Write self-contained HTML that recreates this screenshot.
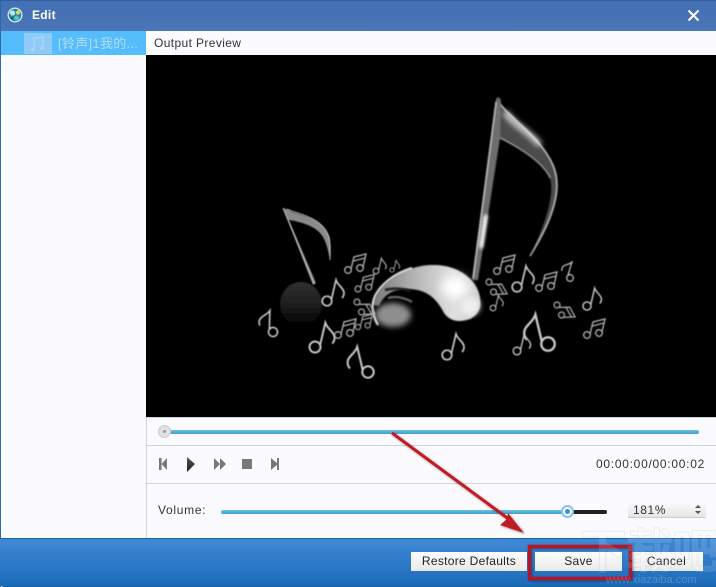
<!DOCTYPE html>
<html><head><meta charset="utf-8">
<style>
html,body{margin:0;padding:0;background:#fff}
#w{position:relative;width:716px;height:587px;overflow:hidden;background:#fbfaff;font-family:"Liberation Sans","Noto Sans CJK SC",sans-serif;font-size:12px;color:#333;letter-spacing:.3px}
#w div{position:absolute;box-sizing:border-box}
.btn{top:552px;height:19px;background:linear-gradient(#fdfdfd,#e9e9e9);color:#222;text-align:center;line-height:19px;font-size:12px}
</style></head><body>
<div id="w">
<div style="left:0;top:0;width:716px;height:31px;background:linear-gradient(#4370b2,#4a75b8);border-top:1px solid #2f5f9e"></div>
<div style="left:0;top:0;width:1px;height:587px;background:#2a6aa5"></div>
<svg style="position:absolute;left:7px;top:7px" width="16" height="16" viewBox="0 0 16 16"><circle cx="8" cy="8" r="7.5" fill="#d8f0ec"/><circle cx="8" cy="8" r="6.2" fill="#1f8a9c"/><circle cx="5.5" cy="6" r="2.600" fill="#bfe6e0"/><circle cx="11" cy="5.500" r="2.200" fill="#d9d46a"/><circle cx="9.500" cy="11" r="2.400" fill="#56c0d8"/><circle cx="5" cy="11" r="1.400" fill="#2a5f80"/></svg>
<div style="left:32px;top:8px;color:#fff;font-weight:bold;font-size:12px;line-height:15px">Edit</div>
<svg style="position:absolute;left:687px;top:9px" width="13" height="13" viewBox="0 0 13 13"><path d="M1.500 1.500L11.500 11.500M11.500 1.500L1.500 11.500" stroke="#fff" stroke-width="2"/></svg>

<div style="left:1px;top:31px;width:145px;height:24px;background:#55bdfb"></div>
<div style="left:24px;top:33px;width:28px;height:21px;background:#8fcbf6"></div>
<svg style="position:absolute;left:24px;top:33px" width="28" height="21" viewBox="0 0 28 21"><path d="M10 16V5.500L19 4V14.500" fill="none" stroke="#a9d6f5" stroke-width="1.500"/><ellipse cx="8.500" cy="16.500" rx="2.300" ry="1.800" fill="#a9d6f5"/><ellipse cx="17.500" cy="15" rx="2.300" ry="1.800" fill="#a9d6f5"/></svg>
<div style="left:58px;top:36px;color:#b3dcf8;font-size:13px;line-height:15px;white-space:nowrap">[铃声]1我的...</div>
<div style="left:154px;top:36px;color:#333;font-size:12px;line-height:15px;letter-spacing:.38px">Output Preview</div>

<div style="left:146px;top:55px;width:570px;height:362px;background:#000"></div>
<svg style="position:absolute;left:146px;top:55px" width="570" height="362" viewBox="146 55 570 362">
<defs>
<filter id="b0" filterUnits="userSpaceOnUse" x="146" y="55" width="570" height="362"><feGaussianBlur stdDeviation="0.450"/></filter>
<filter id="b1" filterUnits="userSpaceOnUse" x="146" y="55" width="570" height="362"><feGaussianBlur stdDeviation="0.800"/></filter>
<filter id="b15" filterUnits="userSpaceOnUse" x="146" y="55" width="570" height="362"><feGaussianBlur stdDeviation="1.500"/></filter>
<filter id="b2" filterUnits="userSpaceOnUse" x="146" y="55" width="570" height="362"><feGaussianBlur stdDeviation="3"/></filter>
<filter id="b3" filterUnits="userSpaceOnUse" x="146" y="55" width="570" height="362"><feGaussianBlur stdDeviation="5"/></filter>
<linearGradient id="dk" x1="0" y1="0" x2="0" y2="1"><stop offset="0" stop-color="#303030"/><stop offset="0.500" stop-color="#1e1e1e"/><stop offset="1" stop-color="#000"/></linearGradient>
<linearGradient id="cr" x1="0" y1="0" x2="1" y2="0"><stop offset="0" stop-color="#777"/><stop offset="0.450" stop-color="#bdbdbd"/><stop offset="0.750" stop-color="#e0e0e0"/><stop offset="1" stop-color="#cfcfcf"/></linearGradient>
<g id="n" fill="none" stroke="#c6c6c6" stroke-width="1.700"><circle cx="0" cy="0" r="4.800"/><path d="M4.500-2L9-21C11-15 17-13 17-8C17-6 16-4 15-3" /></g>
<g id="d" fill="none" stroke="#a8a8a8" stroke-width="1.400"><circle cx="0" cy="0" r="3.300"/><circle cx="12" cy="-2" r="3.300"/><path d="M3-1L6-13L18-16L15-3M5.500-9L17-12"/></g>
</defs>
<g filter="url(#b1)">
<path d="M498 100C505 115 540 135 553 165C562 185 556 215 530 256C545 225 555 195 550 178C543 162 518 147 500 138Z" fill="#4c4c4c"/>
<path d="M498 100C505 115 540 135 553 165C562 185 556 215 530 256" fill="none" stroke="#cfcfcf" stroke-width="1.300"/>
<path d="M500 138C518 147 543 162 550 178" fill="none" stroke="#b0b0b0" stroke-width="1"/>
<path d="M496 99C498 96 501 97 501 103L500 138L478 280L472 280Z" fill="#6e6e6e"/>
<path d="M496 102L473 278" stroke="#d8d8d8" stroke-width="1.200"/>
</g>
<path d="M486 215L481 248" stroke="#fff" stroke-width="4" filter="url(#b15)"/>
<path d="M505 112C515 126 530 132 540 145" stroke="#eee" stroke-width="5" fill="none" filter="url(#b2)"/>
<g filter="url(#b0)">
<path d="M283 208L286 209C296 216 322 216 329 237C331 245 330 254 330 260C328 250 326 238 318 231C310 224 296 221 289 220L316 283L313 285Z" fill="#8a8a8a"/>
<path d="M283 208L314 284M287 209C296 214 322 216 329 237C331 245 330 254 330 260" fill="none" stroke="#c8c8c8" stroke-width=".9"/>
</g>
<ellipse cx="301" cy="304" rx="21" ry="22" fill="url(#dk)" filter="url(#b1)"/>
<!-- big note head -->
<ellipse cx="393" cy="315" rx="18" ry="12" fill="#8e8e8e" filter="url(#b2)"/>
<path d="M373 305C376 285 405 265 432 265C458 264 478 280 480 298C482 310 476 316 470 319C458 323 450 321 444 313C436 297 425 289 408 289C395 288 384 294 379 306Z" fill="url(#cr)" filter="url(#b1)"/>
<ellipse cx="455" cy="287" rx="14" ry="11" fill="#fff" filter="url(#b3)"/>
<ellipse cx="470" cy="306" rx="10" ry="9" fill="#eee" filter="url(#b2)"/>
<path d="M388 298C394 296 404 297 412 302" fill="none" stroke="#777" stroke-width="2" filter="url(#b1)"/>
<path d="M385 290C392 288 402 288 410 291" fill="none" stroke="#1a1a1a" stroke-width="2.500" filter="url(#b1)"/>
<path d="M378 325C372 315 371 305 375 296C381 284 395 273 412 268" fill="none" stroke="#f0f0f0" stroke-width="2" filter="url(#b1)"/>
<g filter="url(#b0)">
<use href="#n" transform="translate(273 332) rotate(-165) scale(.95 -.95)"/>
<use href="#n" transform="translate(315 347) scale(1.150)"/>
<use href="#n" transform="translate(327 301) scale(1)"/>
<use href="#n" transform="translate(368 372) scale(-1.200 1.200)"/>
<use href="#n" transform="translate(447 355) scale(1)"/>
<use href="#n" transform="translate(517 287) scale(1)"/>
<use href="#n" transform="translate(570 278) rotate(-150) scale(.7 -.7)"/>
<use href="#n" transform="translate(587 306) scale(.85)"/>
<use href="#n" transform="translate(548 344) scale(-1.400 1.400)"/>
<use href="#n" transform="translate(517 351) scale(.8)"/>
<use href="#n" transform="translate(493 308) scale(.6)"/>
<use href="#n" transform="translate(376 271) scale(.6)"/>
<use href="#n" transform="translate(392 270) scale(.45)"/>
<use href="#d" transform="translate(348 270)"/>
<use href="#d" transform="translate(358 289) scale(.9)"/>
<use href="#d" transform="translate(338 335)"/>
<use href="#d" transform="translate(358 327) scale(.8)"/>
<use href="#d" transform="translate(357 302) rotate(75) scale(.9)"/>
<use href="#d" transform="translate(497 271)"/>
<use href="#d" transform="translate(489 282) rotate(75) scale(.9)"/>
<use href="#d" transform="translate(539 288)"/>
<use href="#d" transform="translate(557 305) rotate(75) scale(.9)"/>
<use href="#d" transform="translate(587 335)"/>
</g>
</svg>

<div style="left:146px;top:417px;width:570px;height:1px;background:#c8d4de"></div>
<div style="left:146px;top:445px;width:570px;height:1px;background:#c9d6e2"></div>
<div style="left:146px;top:483px;width:570px;height:1px;background:#c9d6e2"></div>
<div style="left:146px;top:417px;width:1px;height:121px;background:#c9d6e2"></div>
<div style="left:164px;top:430px;width:535px;height:4px;background:linear-gradient(#6fc0e4,#3f9fd0);border-radius:2px"></div>
<div style="left:158px;top:425px;width:13px;height:13px;border-radius:50%;background:#e2e2e2;border:1px solid #ccc"></div>
<div style="left:163px;top:430px;width:3px;height:3px;border-radius:50%;background:#999"></div>

<svg style="position:absolute;left:155px;top:455px" width="130" height="18" viewBox="0 0 130 18"><defs><linearGradient id="pl" x1="0" y1="0" x2="0" y2="1"><stop offset="0" stop-color="#55555c"/><stop offset="1" stop-color="#1d1d24"/></linearGradient></defs><g fill="#77777c"><rect x="4" y="3" width="2.500" height="12"/><path d="M12 3V15L6.500 9Z"/><path d="M59 3L65 9L59 15ZM65 3L71 9L65 15Z"/><rect x="87" y="4" width="10" height="10"/><path d="M116 3L123 9L116 15Z"/><rect x="122" y="3" width="2" height="12"/></g><path d="M32 2L40 9L32 17Z" fill="url(#pl)"/></svg>
<div style="left:596px;top:457px;font-size:12px;color:#333;line-height:15px;letter-spacing:.72px;white-space:nowrap">00:00:00/00:00:02</div>

<div style="left:158px;top:503px;font-size:12px;color:#333;line-height:15px;letter-spacing:.7px">Volume:</div>
<div style="left:221px;top:510px;width:347px;height:4px;background:linear-gradient(#6fc0e4,#3f9fd0);border-radius:2px"></div>
<div style="left:567px;top:510px;width:40px;height:4px;background:#222;border-radius:2px"></div>
<div style="left:561px;top:505px;width:13px;height:13px;border-radius:50%;background:#fff;border:2px solid #7fc6ee"></div>
<div style="left:565px;top:509px;width:5px;height:5px;border-radius:50%;background:#3c8ecc"></div>
<div style="left:628px;top:503px;width:78px;height:15px;background:linear-gradient(#fafafa,#e6e6e6);border-bottom:1px solid #ccc;font-size:12px;line-height:15px;padding-left:5px;color:#333;letter-spacing:.6px">181%</div>
<svg style="position:absolute;left:694px;top:504px" width="8" height="11" viewBox="0 0 8 11"><path d="M1 4L4 1L7 4ZM1 7L4 10L7 7Z" fill="#555"/></svg>

<div style="left:0;top:538px;width:716px;height:49px;background:linear-gradient(#4089d6,#1b6bb9);border-top:1px solid #1c5f9f;border-bottom:1px solid #17609f;border-bottom-left-radius:4px"></div>

<div class="btn" style="left:411px;width:116px">Restore Defaults</div>
<div class="btn" style="left:535px;width:87px">Save</div>
<div class="btn" style="left:630px;width:73px">Cancel</div>

<svg style="position:absolute;left:0;top:0" width="716" height="587" viewBox="0 0 716 587">
<defs><filter id="sh" x="-10%" y="-10%" width="120%" height="120%"><feDropShadow dx="1" dy="1" stdDeviation="1.200" flood-color="#000" flood-opacity=".4"/></filter></defs>
<g filter="url(#sh)">
<rect x="529.500" y="546.500" width="101" height="32" fill="none" stroke="#b3192a" stroke-width="3.500"/>
<path d="M392 433L510 520" stroke="#c01a22" stroke-width="3" fill="none"/>
<path d="M524 533L500 525L507 519L508 513Z" fill="#c01a22"/>
</g>
</svg>
<div style="left:580px;top:526px;font-size:47px;line-height:52px;letter-spacing:-1px;color:rgba(255,255,255,.12);-webkit-text-stroke:1px rgba(150,170,190,.18);font-weight:bold;white-space:nowrap">下载吧</div>
<div style="left:606px;top:574px;font-size:11px;line-height:12px;color:rgba(255,255,255,.22);white-space:nowrap;letter-spacing:0">www.xiazaiba.com</div>
</div>
</body></html>
